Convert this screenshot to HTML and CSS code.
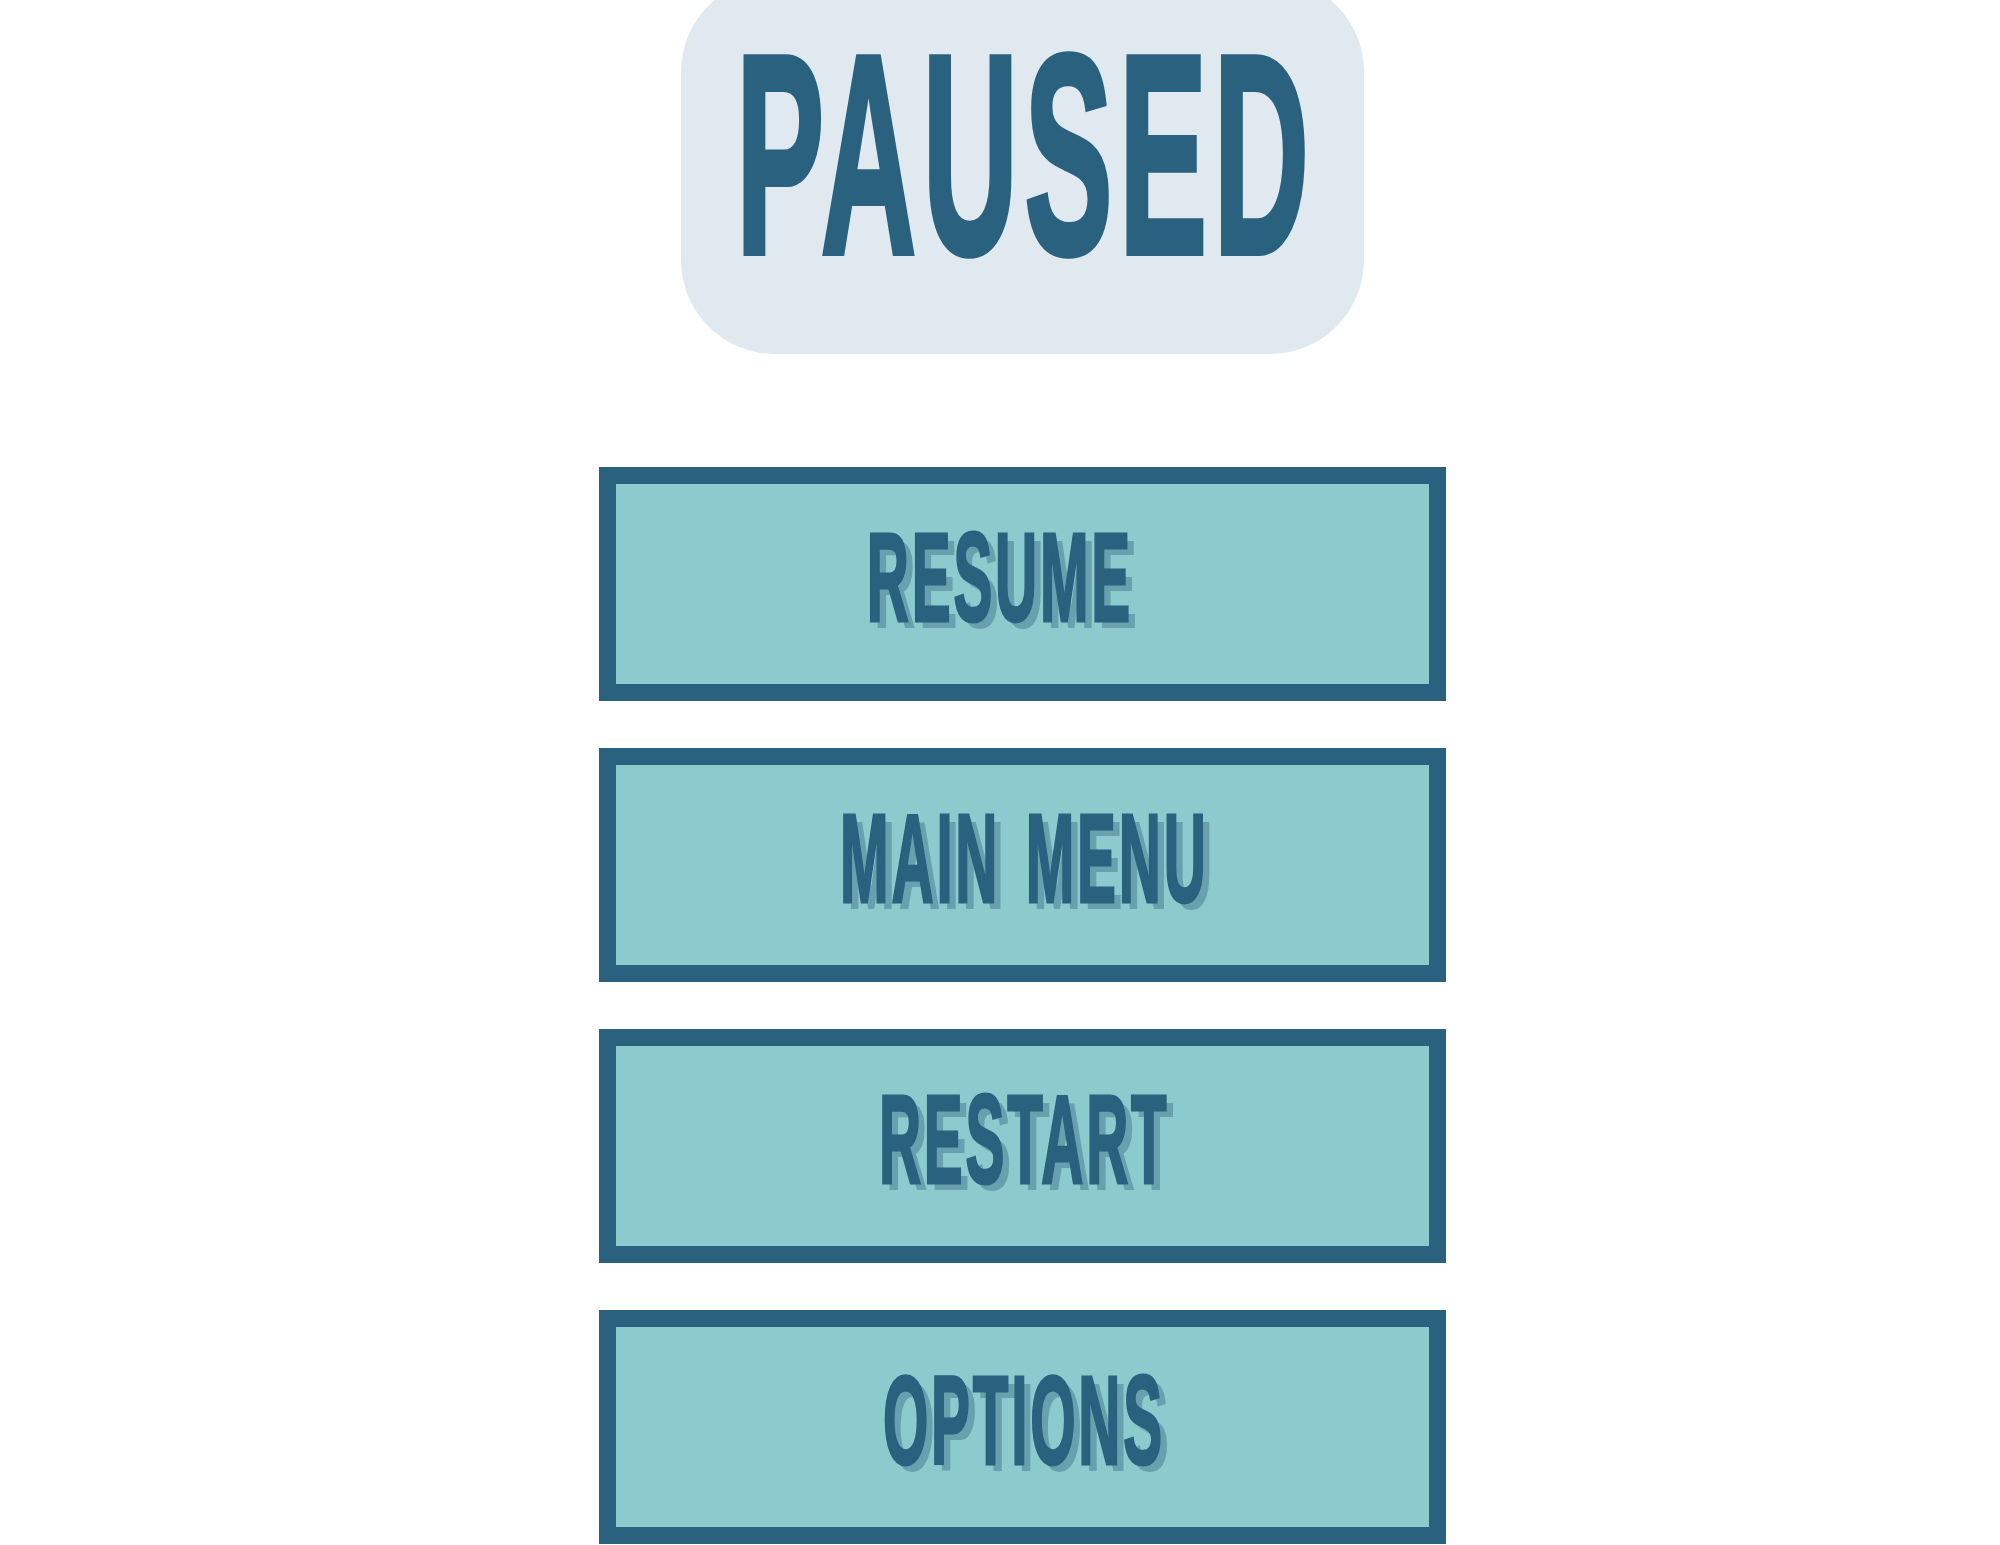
FILE: index.html
```html
<!DOCTYPE html>
<html lang="en">
<head>
<meta charset="utf-8">
<title>Paused</title>
<link rel="stylesheet" href="styles.css">
</head>
<body>
<main class="pause-screen">
  <header class="title-card">
    <h1 class="title"><span class="title-text">PAUSED</span></h1>
  </header>
  <nav class="menu">
    <button class="menu-btn resume"><span class="squeeze">RESUME</span></button>
    <button class="menu-btn"><span class="squeeze">MAIN MENU</span></button>
    <button class="menu-btn"><span class="squeeze">RESTART</span></button>
    <button class="menu-btn"><span class="squeeze">OPTIONS</span></button>
  </nav>
</main>
</body>
</html>
```
FILE: styles.css
```css
html, body {
  margin: 0;
  padding: 0;
  background: #ffffff;
  overflow: hidden;
}
body {
  width: 2000px;
  height: 1545px;
  font-family: "Liberation Sans", Arial, sans-serif;
}
.pause-screen {
  display: flex;
  flex-direction: column;
  align-items: center;
  padding-left: 45px;
}
.title-card {
  margin-top: -22px;
  width: 683px;
  height: 376px;
  box-sizing: border-box;
  padding-top: 112px;
  border-radius: 94px;
  background: #e0e9f0;
  display: flex;
  justify-content: center;
  align-items: flex-start;
}
.title {
  margin: 0;
  font-size: 132px;
  line-height: 1;
  font-weight: 700;
  color: #29617f;
  white-space: nowrap;
}
.title-text {
  display: inline-block;
  transform: scaleY(2.156);
  transform-origin: center;
  letter-spacing: 6.5px;
  padding-left: 6.5px;
  -webkit-text-stroke: 2.8px currentColor;
  white-space: nowrap;
}
.squeeze {
  display: inline-block;
  transform: scaleX(0.463);
  transform-origin: center;
  white-space: nowrap;
}
.menu {
  margin-top: 113px;
  display: flex;
  flex-direction: column;
  gap: 47px;
}
.menu-btn {
  width: 847px;
  height: 234px;
  box-sizing: border-box;
  border: 17px solid #29617f;
  background: #8ccacd;
  margin: 0;
  padding: 31px 0 0 0;
  display: flex;
  justify-content: center;
  align-items: flex-start;
  font-family: "Liberation Sans", Arial, sans-serif;
  font-size: 126px;
  line-height: 1;
  font-weight: 700;
  color: #29617f;
  cursor: pointer;
}
.menu-btn .squeeze {
  letter-spacing: 6px;
  padding-left: 6px;
  word-spacing: 14px;
  -webkit-text-stroke: 3px currentColor;
  text-shadow: 15px 7px 0 #68a0ae;
}
.menu-btn.resume {
  padding-right: 48px;
}
```
